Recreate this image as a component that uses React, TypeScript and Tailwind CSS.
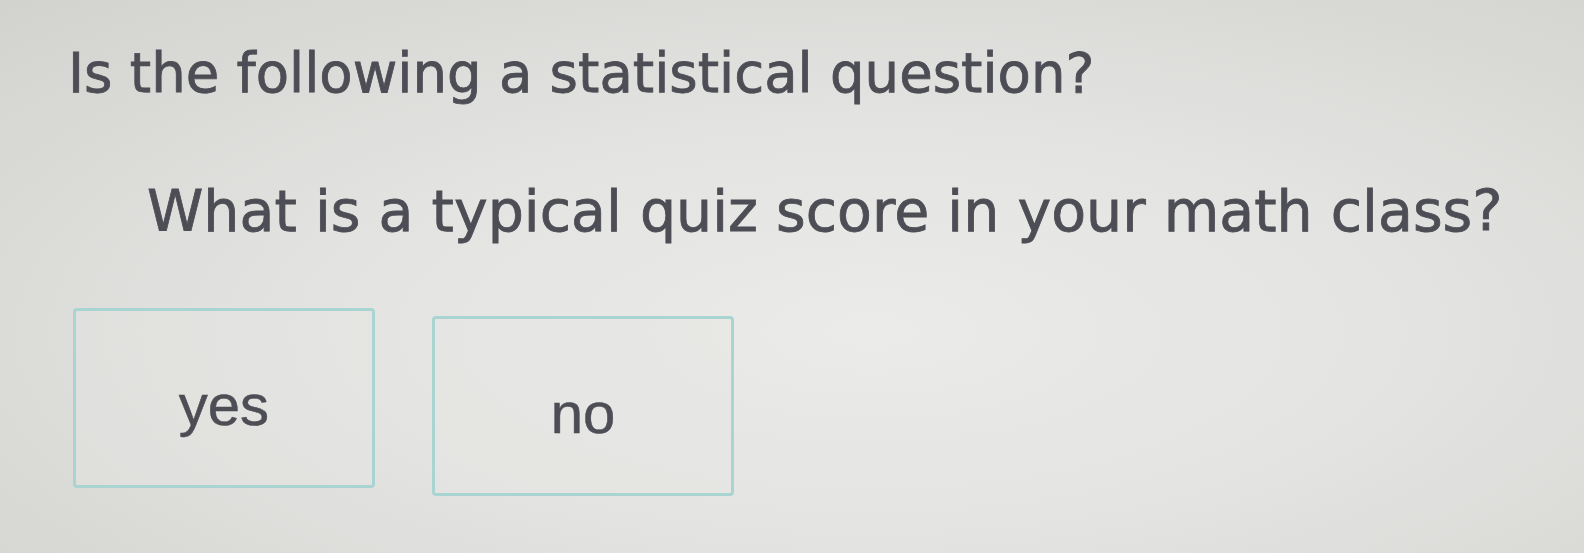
const choices = [
	{ label: "yes", offset: "mt-0" },
	{ label: "no", offset: "mt-2" },
];

export default function App() {
	return (
		<div className="h-[553px] w-[1584px] overflow-hidden bg-[radial-gradient(ellipse_at_55%_60%,#ebece9_0%,#e3e4e1_45%,#d2d3cf_100%)] pl-[68px] pt-[46px] text-[#4d4d55]">
			{/* Prompt */}
			<h1 className="font-['DejaVu_Sans',Verdana,sans-serif] text-[54.5px] leading-none font-normal [-webkit-text-stroke:0.8px_#4d4d55]">
				Is the following a statistical question?
			</h1>

			{/* Question */}
			<p className="ml-[79px] mt-[82px] font-['DejaVu_Sans',Verdana,sans-serif] text-[57px] leading-none [-webkit-text-stroke:0.8px_#4d4d55]">
				What is a typical quiz score in your math class?
			</p>

			{/* Answer choices */}
			<div className="mt-[68px] ml-[5px] flex items-start gap-[57px]">
				{choices.map((c) => (
					<button
						key={c.label}
						type="button"
						className={`${c.offset} flex h-[180px] w-[302px] items-center justify-center rounded-[4px] border-[3px] border-[#a9d4d1] bg-[#e6e7e3]/40 pt-[14px] font-['Liberation_Sans',Arial,sans-serif] text-[58px] leading-none text-[#4d4d55] [-webkit-text-stroke:0.5px_#4d4d55]`}
					>
						{c.label}
					</button>
				))}
			</div>
		</div>
	);
}
